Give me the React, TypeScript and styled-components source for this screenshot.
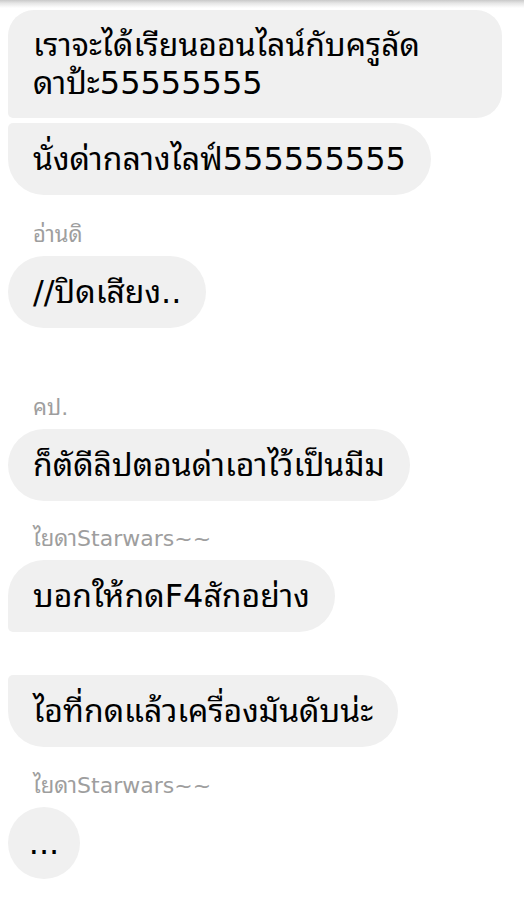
import React from "react";
import styled, { createGlobalStyle, css } from "styled-components";

const GlobalStyle = createGlobalStyle`
  html, body {
    margin: 0;
    padding: 0;
    background: #ffffff;
  }
  body {
    font-family: "DejaVu Sans", "Noto Sans Thai Looped", Loma, Garuda, Waree, "Noto Sans Thai", Roboto, "Noto Sans", sans-serif;
    -webkit-font-smoothing: antialiased;
  }
`;

const Screen = styled.div`
  width: 524px;
  min-height: 918px;
  background: #ffffff;
  display: flex;
  flex-direction: column;
  position: relative;
  overflow: hidden;
`;

const TopShade = styled.div`
  position: absolute;
  top: 0;
  left: 0;
  right: 0;
  height: 8px;
  background: linear-gradient(to bottom, #c9c9c9 0%, #e6e6e6 40%, rgba(255, 255, 255, 0) 100%);
  pointer-events: none;
`;

const Thread = styled.div`
  display: flex;
  flex-direction: column;
  align-items: flex-start;
  padding: 10px 22px 0 8px;
`;

type Corner = "round" | "tight";

interface BubbleProps {
  $top: Corner;
  $bottom: Corner;
  $gap: number;
  $radius?: number;
  $fill?: boolean;
  $circle?: boolean;
}

const Bubble = styled.div<BubbleProps>`
  box-sizing: border-box;
  max-width: 494px;
  width: ${(p) => (p.$fill ? "494px" : p.$circle ? "72px" : "auto")};
  margin-top: ${(p) => p.$gap}px;
  padding: ${(p) => (p.$fill ? "16px 25px" : p.$circle ? "17px 0" : "17px 25px")};
  text-align: ${(p) => (p.$circle ? "center" : "left")};
  background: #f0f0f0;
  color: #000000;
  font-size: 32px;
  line-height: 38px;
  white-space: pre-line;
  ${(p) => {
    const r = p.$radius ?? 36;
    return css`
      border-top-left-radius: ${p.$top === "round" ? r : 5}px;
      border-bottom-left-radius: ${p.$bottom === "round" ? r : 5}px;
      border-top-right-radius: ${r}px;
      border-bottom-right-radius: ${r}px;
    `;
  }}
`;

const Sender = styled.div<{ $gap: number }>`
  margin-top: ${(p) => p.$gap}px;
  margin-bottom: 9px;
  padding-left: 25px;
  font-size: 22px;
  line-height: 24px;
  color: #9e9e9e;
`;

type Item =
  | { kind: "sender"; text: string; gap: number }
  | {
      kind: "msg";
      text: string;
      gap: number;
      top: Corner;
      bottom: Corner;
      radius?: number;
      fill?: boolean;
      circle?: boolean;
    };

const items: Item[] = [
  {
    kind: "msg",
    text: "เราจะได้เรียนออนไลน์กับครูลัด\nดาป้ะ55555555",
    gap: 0,
    top: "round",
    bottom: "tight",
    radius: 26,
    fill: true,
  },
  { kind: "msg", text: "นั่งด่ากลางไลฟ์555555555", gap: 5, top: "tight", bottom: "round" },
  { kind: "sender", text: "อ่านดิ", gap: 28 },
  { kind: "msg", text: "//ปิดเสียง..", gap: 0, top: "round", bottom: "round" },
  { kind: "sender", text: "คป.", gap: 68 },
  { kind: "msg", text: "ก็ตัดีลิปตอนด่าเอาไว้เป็นมีม", gap: 0, top: "round", bottom: "round" },
  { kind: "sender", text: "ไยดาStarwars~~", gap: 26 },
  { kind: "msg", text: "บอกให้กดF4สักอย่าง", gap: 0, top: "round", bottom: "tight" },
  { kind: "msg", text: "ไอที่กดแล้วเครื่องมันดับน่ะ", gap: 43, top: "tight", bottom: "round" },
  { kind: "sender", text: "ไยดาStarwars~~", gap: 27 },
  { kind: "msg", text: "...", gap: 0, top: "round", bottom: "round", circle: true },
];

export default function App() {
  return (
    <Screen>
      <GlobalStyle />
      <Thread>
        {items.map((it, i) =>
          it.kind === "sender" ? (
            <Sender key={i} $gap={it.gap}>
              {it.text}
            </Sender>
          ) : (
            <Bubble
              key={i}
              $gap={it.gap}
              $top={it.top}
              $bottom={it.bottom}
              $radius={it.radius}
              $fill={it.fill}
              $circle={it.circle}
            >
              {it.text}
            </Bubble>
          )
        )}
      </Thread>
      <TopShade />
    </Screen>
  );
}
